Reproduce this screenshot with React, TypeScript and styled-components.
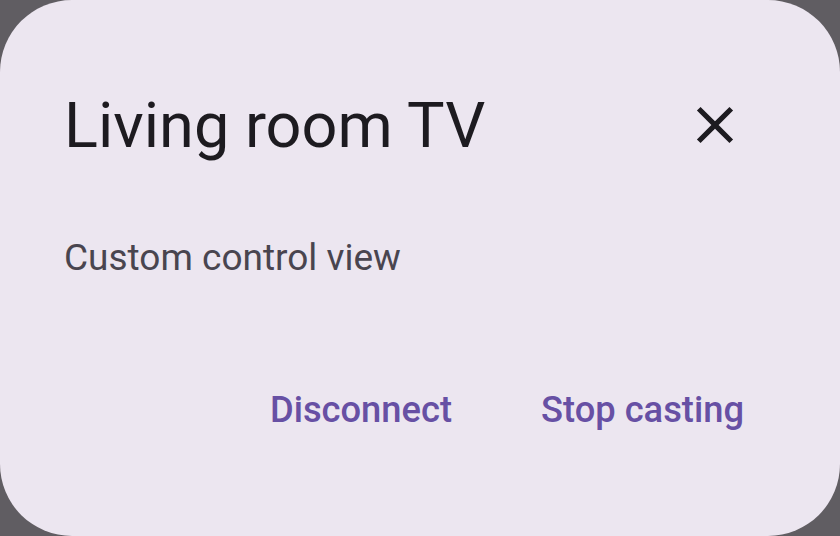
import React from "react";
import styled, { createGlobalStyle } from "styled-components";

const Global = createGlobalStyle`
  html, body {
    margin: 0;
    padding: 0;
    background: #605d62;
  }
  body {
    font-family: Roboto, "Noto Sans", sans-serif;
  }
`;

const Dialog = styled.div`
  width: 840px;
  height: 536px;
  box-sizing: border-box;
  background: #ece6f0;
  border-radius: 72px;
  padding: 61px 64px 73px 64px;
  display: flex;
  flex-direction: column;
`;

const Header = styled.div`
  height: 128px;
  display: flex;
  align-items: center;
  justify-content: space-between;
`;

const Title = styled.h1`
  margin: 0;
  font-family: Roboto, sans-serif;
  font-weight: 400;
  font-size: 63px;
  line-height: 85px;
  color: #1d1b20;
`;

const CloseButton = styled.button`
  width: 128px;
  height: 128px;
  margin-right: -3px;
  border: none;
  background: transparent;
  padding: 0;
  display: flex;
  align-items: center;
  justify-content: center;
  color: #1d1b20;
  cursor: pointer;
`;

const Body = styled.p`
  margin: 42px 0 0 0;
  font-family: Roboto, sans-serif;
  font-size: 37px;
  line-height: 53.3px;
  color: #49454f;
`;

const Actions = styled.div`
  margin-top: auto;
  display: flex;
  justify-content: flex-end;
  gap: 25px;
`;

const TextButton = styled.button`
  height: 106.7px;
  padding: 0 32px;
  border: none;
  background: transparent;
  font-family: Roboto, sans-serif;
  font-weight: 500;
  font-size: 36.3px;
  line-height: 53.3px;
  color: #6750a4;
  cursor: pointer;
`;

const CloseIcon = () => (
  <svg width="62" height="62" viewBox="0 0 24 24" fill="currentColor">
    <path d="M19 6.41L17.59 5 12 10.59 6.41 5 5 6.41 10.59 12 5 17.59 6.41 19 12 13.41 17.59 19 19 17.59 13.41 12z" />
  </svg>
);

export default function App() {
  return (
    <>
      <Global />
      <Dialog>
        <Header>
          <Title>Living room TV</Title>
          <CloseButton aria-label="Close">
            <CloseIcon />
          </CloseButton>
        </Header>
        <Body>Custom control view</Body>
        <Actions>
          <TextButton>Disconnect</TextButton>
          <TextButton>Stop casting</TextButton>
        </Actions>
      </Dialog>
    </>
  );
}
